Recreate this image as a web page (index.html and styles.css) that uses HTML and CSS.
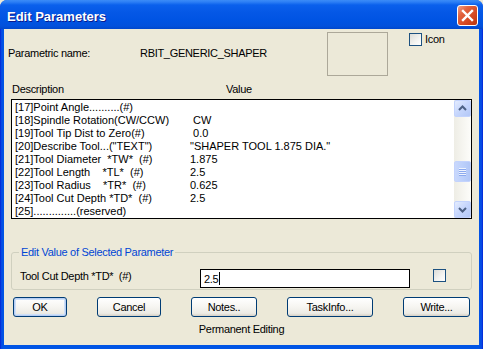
FILE: index.html
```html
<!DOCTYPE html>
<html lang="en">
  <head>
    <title>Edit Parameters</title>
    <meta charset="utf-8" />
    <link rel="stylesheet" href="styles.css">
  </head>
  <body>
    <div class="window">
      <div class="titlebar">
        <span class="title">Edit Parameters</span>
        <span class="close-btn">
          <svg width="21" height="21" viewBox="0 0 21 21">
            <path d="M6 6 L15 15 M15 6 L6 15" stroke="#fff" stroke-width="2.4" stroke-linecap="square" />
          </svg>
        </span>
      </div>

      <div class="client">
        <div class="header">
          <span class="param-label">Parametric name:</span>
          <span class="param-name">RBIT_GENERIC_SHAPER</span>
          <div class="preview"></div>
          <label class="check-label">
            <span class="checkbox"></span>
            <span>Icon</span>
          </label>
        </div>

        <div class="cols">
          <span class="col-desc">Description</span>
          <span>Value</span>
        </div>

        <div class="listbox">
          <div class="rows">
            <div class="row"><span class="desc">[17]Point Angle..........(#)</span><span class="val"></span></div>
            <div class="row"><span class="desc">[18]Spindle Rotation(CW/CCW)</span><span class="val"> CW</span></div>
            <div class="row"><span class="desc">[19]Tool Tip Dist to Zero(#)</span><span class="val"> 0.0</span></div>
            <div class="row"><span class="desc">[20]Describe Tool...("TEXT")</span><span class="val">"SHAPER TOOL 1.875 DIA."</span></div>
            <div class="row"><span class="desc">[21]Tool Diameter  *TW*  (#)</span><span class="val">1.875</span></div>
            <div class="row"><span class="desc">[22]Tool Length    *TL*  (#)</span><span class="val">2.5</span></div>
            <div class="row"><span class="desc">[23]Tool Radius    *TR*  (#)</span><span class="val">0.625</span></div>
            <div class="row"><span class="desc">[24]Tool Cut Depth *TD*  (#)</span><span class="val">2.5</span></div>
            <div class="row"><span class="desc">[25]..............(reserved)</span><span class="val"></span></div>
          </div>
          <div class="scrollbar">
            <span class="sb-btn">
              <svg width="15" height="15" viewBox="0 0 15 15"><polyline points="4,9 7.5,5.5 11,9" fill="none" stroke="#4d6185" stroke-width="2" /></svg>
            </span>
            <div class="sb-track">
              <span class="sb-thumb">
                <i></i><i></i><i></i><i></i>
              </span>
            </div>
            <span class="sb-btn">
              <svg width="15" height="15" viewBox="0 0 15 15"><polyline points="4,6 7.5,9.5 11,6" fill="none" stroke="#4d6185" stroke-width="2" /></svg>
            </span>
          </div>
        </div>

        <fieldset class="group">
          <legend>Edit Value of Selected Parameter</legend>
          <div class="edit-row">
            <span class="edit-label">Tool Cut Depth *TD*  (#)</span>
            <div class="edit-box">2.5<span class="caret"></span></div>
            <span class="checkbox edit-check"></span>
          </div>
        </fieldset>

        <div class="buttons">
          <button class="btn btn-ok">OK</button>
          <button class="btn btn-cancel">Cancel</button>
          <button class="btn btn-notes">Notes..</button>
          <button class="btn btn-task">TaskInfo...</button>
          <button class="btn btn-write">Write...</button>
        </div>

        <div class="status">Permanent Editing</div>
      </div>
    </div>
  </body>
</html>
```

FILE: styles.css
```css
* {
  box-sizing: border-box;
}

body {
  margin: 0;
  background: #ece9d8;
  font-family: 'Liberation Sans', Arial, sans-serif;
  font-size: 11px;
  line-height: 13px;
  letter-spacing: -0.3px;
  color: #000;
}

.window {
  width: 483px;
  height: 349px;
  display: flex;
  flex-direction: column;
  border-radius: 7px 7px 0 0;
  overflow: hidden;
  background: linear-gradient(to right, #0019cf 0, #0846e4 1px, #0055e5 3px, #0055e5 479px, #0846e4 482px, #0019cf 483px);
}

/* barra de titulo */
.titlebar {
  height: 29px;
  flex: none;
  display: flex;
  justify-content: space-between;
  align-items: flex-start;
  padding: 0 5px 0 7px;
  background: linear-gradient(to bottom, #3b8cf7 0, #2c7ff5 2px, #0a60ec 5px, #0558e6 12px, #0054e3 20px, #0251dc 26px, #0047cc 29px);
}

.title {
  margin-top: 9px;
  font-size: 13px;
  line-height: 16px;
  font-weight: bold;
  letter-spacing: 0;
  color: #fff;
  text-shadow: 1px 1px 0 #0a1a8c;
}

.close-btn {
  margin-top: 5px;
  width: 21px;
  height: 21px;
  display: block;
  border: 1px solid #fff;
  border-radius: 3px;
  background: linear-gradient(135deg, #f0a088 0, #e2633f 30%, #d2451f 70%, #b8360f 100%);
}

.close-btn svg {
  display: block;
  margin: -1px;
}

/* area cliente */
.client {
  flex: 1;
  margin: 0 4px 4px;
  background: #ece9d8;
  display: flex;
  flex-direction: column;
}

.header {
  height: 47px;
  display: flex;
  align-items: flex-start;
  padding: 3px 0 0 4px;
}

.param-label {
  width: 132px;
  margin-top: 15px;
}

.param-name {
  width: 187px;
  margin-top: 15px;
}

.preview {
  width: 61px;
  height: 44px;
  border: 1px solid #aca899;
}

.check-label {
  margin: 1px 0 0 21px;
  display: flex;
  align-items: center;
  gap: 3px;
}

.checkbox {
  width: 13px;
  height: 13px;
  display: block;
  border: 1px solid #1c5180;
  background: linear-gradient(135deg, #dcdcd7 0, #f4f4f1 60%, #fff 100%);
}

.cols {
  display: flex;
  margin-top: 7px;
  padding-left: 8px;
}

.col-desc {
  width: 214px;
}

/* lista de parametros */
.listbox {
  height: 120px;
  margin: 3px 7px 0;
  display: flex;
  border: 1px solid #000;
  background: #fff;
}

.rows {
  flex: 1;
  padding: 1px 0 0 3px;
  letter-spacing: 0;
}

.row {
  display: flex;
  height: 13px;
  white-space: pre;
}

.desc {
  width: 175px;
}

.scrollbar {
  width: 17px;
  display: flex;
  flex-direction: column;
  background: linear-gradient(to right, #eeede5, #fdfdfa);
}

.sb-btn {
  width: 17px;
  height: 17px;
  display: block;
  flex: none;
  border: 1px solid #c3d3fd;
  border-radius: 2px;
  background: linear-gradient(135deg, #e4ecfe 0, #c6d6fc 50%, #b3c8f7 100%);
}

.sb-btn svg {
  display: block;
}

.sb-track {
  flex: 1;
  display: flex;
  flex-direction: column;
  justify-content: flex-end;
  padding-bottom: 19px;
}

.sb-thumb {
  height: 21px;
  display: flex;
  flex-direction: column;
  align-items: center;
  justify-content: center;
  gap: 1px;
  border: 1px solid #c3d3fd;
  border-radius: 2px;
  background: linear-gradient(to right, #c9d8fc 0, #bcd0fb 50%, #b1c7f7 100%);
}

.sb-thumb i {
  width: 7px;
  height: 1px;
  background: #eef3fe;
  box-shadow: 0 1px 0 #8caaee;
}

/* grupo de edicao */
.group {
  margin: 27px 7px 0;
  padding: 0 0 1px 7px;
  border: 1px solid #d0d0bf;
  border-radius: 3px;
}

.group legend {
  padding: 0 2px;
  color: #0046d5;
}

.edit-row {
  display: flex;
  align-items: flex-start;
  margin-top: 10px;
}

.edit-label {
  width: 180px;
  margin: 1px 0 0 1px;
  white-space: pre;
}

.edit-box {
  width: 210px;
  height: 19px;
  padding: 3px 0 0 3px;
  border: 1px solid #000;
  background: #fff;
}

.caret {
  display: inline-block;
  width: 1px;
  height: 13px;
  margin: -1px 0 0 1px;
  vertical-align: top;
  background: #000;
}

.edit-check {
  margin-left: 23px;
}

/* botoes */
.buttons {
  display: flex;
  gap: 30px;
  margin-top: 7px;
  padding-left: 9px;
}

.btn {
  height: 20px;
  padding: 0;
  font: inherit;
  letter-spacing: inherit;
  color: #000;
  border: 1px solid #003c74;
  border-radius: 3px;
  background: linear-gradient(to bottom, #fff 0, #f6f5f1 50%, #ecebe5 85%, #d6d0c5 100%);
}

.btn-ok {
  width: 54px;
  box-shadow: inset 0 0 0 1px #b6cdf3, inset 0 0 0 2px #cee0f8;
}

.btn-cancel {
  width: 64px;
}

.btn-notes {
  width: 66px;
}

.btn-task {
  width: 86px;
}

.btn-write {
  width: 67px;
}

.status {
  margin-top: 6px;
  text-align: center;
}
```
